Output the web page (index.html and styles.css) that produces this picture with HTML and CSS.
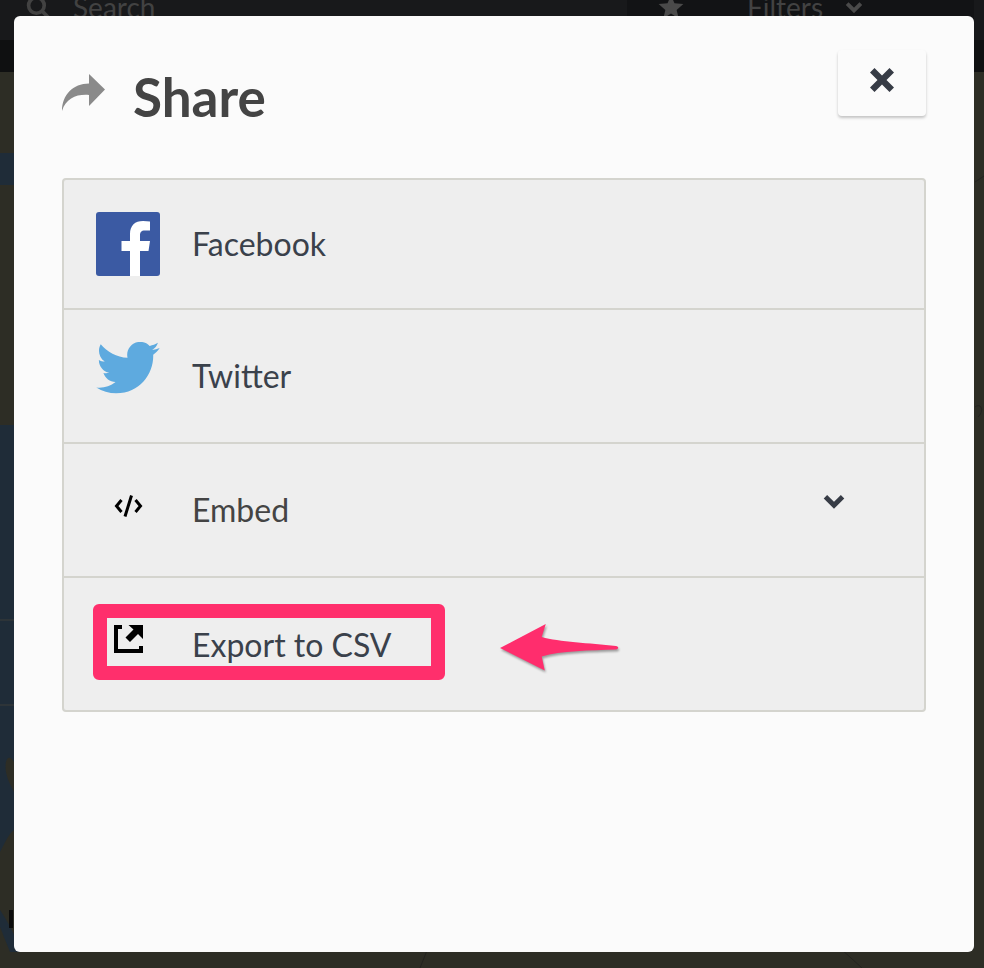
FILE: index.html
```html
<!DOCTYPE html>
<html lang="en">
<head>
    <meta charset="UTF-8">
    <meta name="viewport" content="width=device-width, initial-scale=1.0">
    <title>Share</title>
    <link rel="stylesheet" href="styles.css">
</head>
<body>
    <header class="topbar">
        <div class="search">
            <svg class="search-icon" viewBox="0 0 24 24"><circle cx="10" cy="10" r="7.5"/><path d="M15.5 15.5L22 22"/></svg>
            <span>Search</span>
        </div>
        <div class="bar-tools">
            <svg class="star" viewBox="0 0 24 24"><path d="M12 1l3.2 7.6 8.2.7-6.2 5.4 1.9 8L12 18l-7.1 4.7 1.9-8L.6 9.3l8.2-.7z"/></svg>
            <span class="filters">Filters</span>
            <svg class="filters-chevron" viewBox="0 0 20 14"><path d="M2 3l8 8 8-8"/></svg>
        </div>
    </header>
    <div class="subbar"></div>
    <div class="map">
        <svg class="map-art" viewBox="0 0 984 896" preserveAspectRatio="none">
            <path class="water" d="M0 81H14V113H0z"/>
            <path class="water" d="M0 353H14V690C8 680 4 690 6 700 8 710 12 715 14 720V758C8 762 3 775 0 780z"/>
            <path class="water" d="M0 838C8 850 14 862 22 880H10C6 870 2 860 0 855z"/>
            <path class="road" d="M0 548H14M0 633H14"/>
            <path class="mark" d="M11 838V856"/>
            <path class="crack" d="M975 110L984 104M975 335C982 330 984 340 978 345M420 896L428 876M840 876L862 896"/>
        </svg>
    </div>

    <div class="modal">
        <div class="modal-head">
            <h1 class="modal-title">
                <svg class="share-icon" viewBox="0 0 43 37"><path d="M27 0L43 15.500 27 32V21C15 20 4 24 0 37 0 21 11 9.500 27 9.500z"/></svg>
                Share
            </h1>
            <button class="close-btn" aria-label="Close">
                <svg viewBox="0 0 24 24"><path d="M4.500 0L12 7.500 19.500 0 24 4.500 16.500 12 24 19.500 19.500 24 12 16.500 4.500 24 0 19.500 7.500 12 0 4.500z"/></svg>
            </button>
        </div>
        <ul class="share-list">
            <li class="share-row row-facebook">
                <svg class="row-icon" viewBox="0 0 64 64">
                    <rect width="64" height="64" rx="3" fill="#3b5aa3"/>
                    <path fill="#fff" d="M34 64V39H25.500V29H34V22C34 13.500 39 9 47 9c2.500 0 5 .2 7 .5V18.500H49c-4 0-5 2-5 5V29H54L52.500 39H44V64z"/>
                </svg>
                <span>Facebook</span>
            </li>
            <li class="share-row row-twitter">
                <svg class="row-icon bird" viewBox="0 0 24 19.700"><path fill="#5eaadf" d="M24 2.250c-.883.392-1.832.656-2.828.775 1.017-.609 1.798-1.574 2.165-2.724-.951.564-2.005.974-3.127 1.195-.897-.957-2.178-1.555-3.594-1.555-3.179 0-5.515 2.966-4.797 6.045-4.091-.205-7.719-2.165-10.148-5.144-1.290 2.213-.669 5.108 1.523 6.574-.806-.026-1.566-.247-2.229-.616-.054 2.281 1.581 4.415 3.949 4.890-.693.188-1.452.232-2.224.084.626 1.956 2.444 3.379 4.600 3.419-2.070 1.623-4.678 2.348-7.290 2.040 2.179 1.397 4.768 2.212 7.548 2.212 9.142 0 14.307-7.721 13.995-14.646.962-.695 1.797-1.562 2.457-2.549z"/></svg>
                <span>Twitter</span>
            </li>
            <li class="share-row row-embed">
                <svg class="row-icon code" viewBox="0 0 29 22"><path d="M7.500 5L2.500 11l5 6M21.500 5l5 6-5 6M17.500.5L11 21.500"/></svg>
                <span>Embed</span>
                <svg class="row-chevron" viewBox="0 0 20 14"><path d="M2 2.500l8 8 8-8"/></svg>
            </li>
            <li class="share-row row-export">
                <svg class="row-icon export" viewBox="0 0 29 28">
                    <path class="export-box" d="M8 2H2V26H27V21"/>
                    <path fill="#000" d="M14.500 0H29V14L24 9l-8 8-4.500-4.500 8-8z"/>
                </svg>
                <span>Export to CSV</span>
            </li>
        </ul>
        <div class="callout-box"></div>
        <svg class="callout-arrow" viewBox="0 0 120 50" preserveAspectRatio="none">
            <path d="M2 26L47 2 43 15C60 20 90 21 116 24c3 .5 3 3 0 3.500-25 1-54 1-73 7l3 14z"/>
        </svg>
    </div>
</body>
</html>
```

FILE: styles.css
```css
body {
    margin: 0;
    width: 984px;
    height: 968px;
    overflow: hidden;
    background: #2d2d25;
    font-family: Lato, 'Liberation Sans', sans-serif;
    position: relative;
}
.topbar {
    height: 40px;
    background: #18191b;
    display: flex;
    justify-content: space-between;
    color: #444;
    overflow: hidden;
}
.search {
    display: flex;
    align-items: center;
    gap: 22px;
    padding: 0 0 26px 26px;
    font-size: 28px;
    color: #424242;
}
.search-icon {
    width: 25px;
    height: 25px;
    flex: none;
    fill: none;
    stroke: #424242;
    stroke-width: 3.5;
}
.bar-tools {
    width: 347px;
    height: 40px;
    margin-right: 10px;
    background: #121315;
    display: flex;
    align-items: center;
    padding: 0 0 26px 31px;
    box-sizing: border-box;
}
.star {
    width: 26px;
    height: 26px;
    fill: #4a4a4a;
    flex: none;
    margin-right: 63px;
}
.filters {
    font-size: 28px;
    color: #424242;
    margin-right: 22px;
}
.filters-chevron {
    width: 18px;
    height: 12px;
    flex: none;
    fill: none;
    stroke: #4a4a4a;
    stroke-width: 4.500;
}
.subbar {
    height: 32px;
    background: #0f1011;
}
.map {
    height: 896px;
    background: #2d2d25;
}
.map-art {
    display: block;
    width: 100%;
    height: 100%;
}
.water {
    fill: #1f2c38;
}
.road {
    stroke: #3c3c38;
    fill: none;
}
.mark {
    stroke: #0c0c0c;
    stroke-width: 4;
}
.crack {
    stroke: #232320;
    fill: none;
}

.modal {
    position: absolute;
    left: 14px;
    top: 16px;
    width: 960px;
    height: 936px;
    box-sizing: border-box;
    padding: 34px 48px 0;
    background: #fbfbfb;
    border-radius: 6px;
}
.modal-head {
    display: flex;
    justify-content: space-between;
    align-items: flex-start;
    height: 128px;
}
.modal-title {
    display: flex;
    align-items: center;
    gap: 28px;
    margin: 17px 0 0;
    font-size: 53px;
    line-height: 60px;
    font-weight: 700;
    color: #444;
}
.share-icon {
    width: 43px;
    height: 37px;
    fill: #8a8a8a;
    flex: none;
    margin-top: -9px;
}
.close-btn {
    width: 88px;
    height: 66px;
    padding: 0;
    border: none;
    border-radius: 4px;
    background: #fbfbfb;
    box-shadow: 0 2px 3px rgba(0, 0, 0, 0.22);
    display: flex;
    justify-content: center;
    padding-top: 18px;
    box-sizing: border-box;
}
.close-btn svg {
    width: 24px;
    height: 24px;
    fill: #373c46;
}
.share-list {
    list-style: none;
    margin: 0;
    padding: 0;
    background: #eee;
    border: 2px solid #d4d4ce;
    border-radius: 4px;
}
.share-row {
    display: flex;
    align-items: flex-start;
    box-sizing: border-box;
    border-bottom: 2px solid #d4d4ce;
    padding-left: 32px;
    font-size: 32px;
    line-height: 40px;
    color: #3a414b;
    position: relative;
}
.share-row:last-child {
    border-bottom: none;
}
.row-icon {
    width: 64px;
    flex: none;
    margin-right: 32px;
}
.row-facebook {
    height: 130px;
    padding-top: 32px;
}
.row-facebook span {
    margin-top: 12px;
}
.row-facebook .row-icon {
    height: 64px;
}
.row-twitter {
    height: 134px;
    padding-top: 32px;
}
.row-twitter span {
    margin-top: 14px;
}
.bird {
    height: 52px;
}
.row-embed {
    height: 134px;
    padding-top: 46px;
    color: #444;
}
.code {
    width: 29px;
    height: 22px;
    margin: 5px 49px 0 18px;
    fill: none;
    stroke: #000;
    stroke-width: 3;
}
.row-chevron {
    position: absolute;
    right: 79px;
    top: 50px;
    width: 22px;
    height: 15px;
    fill: none;
    stroke: #373c46;
    stroke-width: 4.500;
}
.row-export {
    height: 132px;
    padding-top: 47px;
}
.export {
    width: 29px;
    height: 28px;
    margin: 0 49px 0 18px;
}
.export-box {
    fill: none;
    stroke: #000;
    stroke-width: 4;
}

/* annotation drawn on top of the screenshot */
.callout-box {
    position: absolute;
    left: 79px;
    top: 588px;
    width: 352px;
    height: 76px;
    box-sizing: border-box;
    border: 14px solid #ff2f6c;
    border-radius: 6px;
}
.callout-arrow {
    position: absolute;
    left: 484px;
    top: 606px;
    width: 122px;
    height: 50px;
    fill: #ff2d6d;
    filter: drop-shadow(1px 2px 1px rgba(0, 0, 0, 0.35));
}
```
